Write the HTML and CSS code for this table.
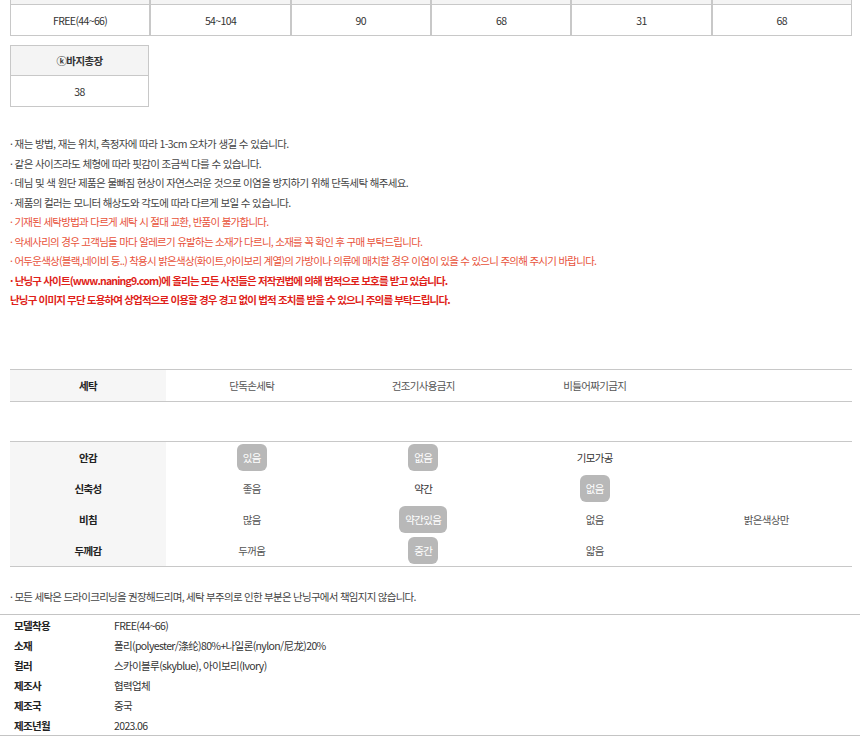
FILE: index.html
```html
<!DOCTYPE html>
<html lang="ko">
<head>
<meta charset="utf-8">
<link rel="stylesheet" href="styles.css">
</head>
<body>
<div class="wrap">
  <table class="size">
    <tr class="size-head"><td></td><td></td><td></td><td></td><td></td><td></td></tr>
    <tr class="size-row"><td>FREE(44~66)</td><td>54~104</td><td>90</td><td>68</td><td>31</td><td>68</td></tr>
  </table>

  <table class="mini">
    <tr><th>ⓚ바지총장</th></tr>
    <tr><td>38</td></tr>
  </table>

  <ul class="notes">
    <li>· 재는 방법, 재는 위치, 측정자에 따라 1-3cm 오차가 생길 수 있습니다.</li>
    <li>· 같은 사이즈라도 체형에 따라 핏감이 조금씩 다를 수 있습니다.</li>
    <li>· 데님 및 색 원단 제품은 물빠짐 현상이 자연스러운 것으로 이염을 방지하기 위해 단독세탁 해주세요.</li>
    <li>· 제품의 컬러는 모니터 해상도와 각도에 따라 다르게 보일 수 있습니다.</li>
    <li class="warn">· 기재된 세탁방법과 다르게 세탁 시 절대 교환, 반품이 불가합니다.</li>
    <li class="warn">· 악세사리의 경우 고객님들 마다 알레르기 유발하는 소재가 다르니, 소재를 꼭 확인 후 구매 부탁드립니다.</li>
    <li class="warn">· 어두운색상(블랙,네이비 등..) 착용시 밝은색상(화이트,아이보리 계열)의 가방이나 의류에 매치할 경우 이염이 있을 수 있으니 주의해 주시기 바랍니다.</li>
    <li class="alert">· 난닝구 사이트(www.naning9.com)에 올리는 모든 사진들은 저작권법에 의해 범적으로 보호를 받고 있습니다.</li>
    <li class="alert">난닝구 이미지 무단 도용하여 상업적으로 이용할 경우 경고 없이 법적 조치를 받을 수 있으니 주의를 부탁드립니다.</li>
  </ul>

  <table class="care">
    <tr>
      <th>세탁</th>
      <td>단독손세탁</td>
      <td>건조기사용금지</td>
      <td>비틀어짜기금지</td>
      <td></td>
    </tr>
  </table>

  <table class="care props">
    <tr>
      <th>안감</th>
      <td><span class="pill">있음</span></td>
      <td><span class="pill">없음</span></td>
      <td class="dark">기모가공</td>
      <td></td>
    </tr>
    <tr>
      <th>신축성</th>
      <td>좋음</td>
      <td class="dark">약간</td>
      <td><span class="pill">없음</span></td>
      <td></td>
    </tr>
    <tr>
      <th>비침</th>
      <td>많음</td>
      <td><span class="pill">약간있음</span></td>
      <td>없음</td>
      <td>밝은색상만</td>
    </tr>
    <tr>
      <th>두께감</th>
      <td>두꺼움</td>
      <td><span class="pill">중간</span></td>
      <td>얇음</td>
      <td></td>
    </tr>
  </table>

  <p class="care-note">· 모든 세탁은 드라이크리닝을 권장해드리며, 세탁 부주의로 인한 부분은 난닝구에서 책임지지 않습니다.</p>
</div>

<dl class="info">
  <div class="info-row"><dt>모델착용</dt><dd>FREE(44~66)</dd></div>
  <div class="info-row"><dt>소재</dt><dd>폴리(polyester/涤纶)80%+나일론(nylon/尼龙)20%</dd></div>
  <div class="info-row"><dt>컬러</dt><dd>스카이블루(skyblue), 아이보리(Ivory)</dd></div>
  <div class="info-row"><dt>제조사</dt><dd>협력업체</dd></div>
  <div class="info-row"><dt>제조국</dt><dd>중국</dd></div>
  <div class="info-row"><dt>제조년월</dt><dd>2023.06</dd></div>
</dl>
</body>
</html>
```

FILE: styles.css
```css
* { box-sizing: border-box; }
html, body { margin: 0; padding: 0; background: #fff; }
body {
  font-family: "Noto Sans CJK KR", "Noto Sans", sans-serif;
  font-size: 10.5px;
  color: #444;
  letter-spacing: -0.06em;
}
.wrap { padding: 0 8px 0 10px; }

table { border-collapse: separate; border-spacing: 0; }

.size { width: 842px; table-layout: fixed; }
.size td {
  border-left: 1px solid #c8c8c8;
  border-right: 1px solid #c8c8c8;
  border-bottom: 1px solid #c8c8c8;
  text-align: center;
  padding: 0;
  color: #333;
}
.size-head td { height: 5px; background: #f4f4f4; }
.size-row td { height: 31px; }

.mini { width: 139px; margin-top: 9px; border: 1px solid #c8c8c8; }
.mini th {
  height: 30px;
  background: #f4f4f4;
  border-bottom: 1px solid #c8c8c8;
  font-weight: bold;
  color: #333;
  padding: 0;
}
.mini td { height: 30px; text-align: center; padding: 0; color: #333; }

.notes { list-style: none; margin: 27px 0 0; padding: 0; }
.notes li { line-height: 19.5px; white-space: nowrap; }
.notes .warn { color: #e8523a; letter-spacing: -0.07em; }
.notes .alert { color: #e01f1a; font-weight: bold; letter-spacing: -0.08em; }

.care {
  width: 842px;
  table-layout: fixed;
  margin-top: 59px;
  border-top: 1px solid #c8c8c8;
  border-bottom: 1px solid #c8c8c8;
}
.care th {
  width: 156px;
  background: #f6f6f6;
  font-weight: bold;
  color: #222;
  height: 31px;
  padding: 0;
}
.care td { text-align: center; color: #555; height: 31px; padding: 0; }
.care .dark { color: #333; }

.props { margin-top: 39px; }

.pill {
  display: inline-block;
  height: 27px;
  line-height: 27px;
  padding: 0 6px;
  border-radius: 6px;
  background: #b8b8b8;
  color: #fff;
}

.care-note { margin: 20px 0 0; line-height: 19.5px; letter-spacing: -0.07em; }

.info {
  margin: 8px 0 0;
  border-top: 1px solid #c4c4c4;
  border-bottom: 1px solid #c4c4c4;
}
.info-row { display: flex; height: 20px; align-items: center; }
.info dt { width: 114px; padding-left: 14px; font-weight: bold; color: #222; }
.info dd { margin: 0; color: #333; }
```
